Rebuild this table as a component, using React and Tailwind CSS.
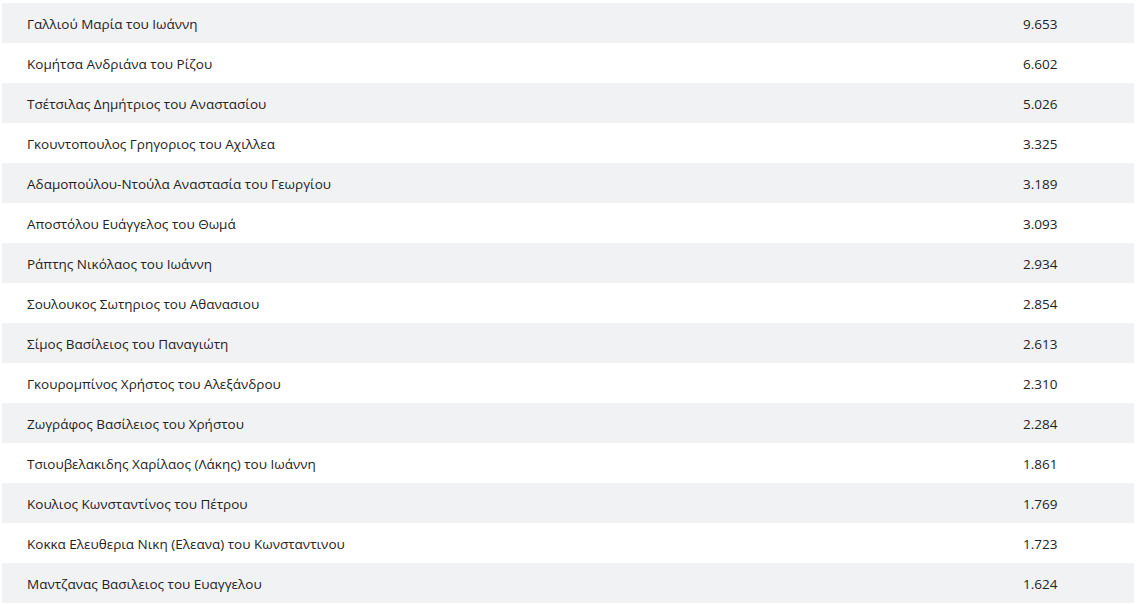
import React from "react";

const rows = [
  ["Γαλλιού Μαρία του Ιωάννη", "9.653"],
  ["Κομήτσα Ανδριάνα του Ρίζου", "6.602"],
  ["Τσέτσιλας Δημήτριος του Αναστασίου", "5.026"],
  ["Γκουντοπουλος Γρηγοριος του Αχιλλεα", "3.325"],
  ["Αδαμοπούλου-Ντούλα Αναστασία του Γεωργίου", "3.189"],
  ["Αποστόλου Ευάγγελος του Θωμά", "3.093"],
  ["Ράπτης Νικόλαος του Ιωάννη", "2.934"],
  ["Σουλουκος Σωτηριος του Αθανασιου", "2.854"],
  ["Σίμος Βασίλειος του Παναγιώτη", "2.613"],
  ["Γκουρομπίνος Χρήστος του Αλεξάνδρου", "2.310"],
  ["Ζωγράφος Βασίλειος του Χρήστου", "2.284"],
  ["Τσιουβελακιδης Χαρίλαος (Λάκης) του Ιωάννη", "1.861"],
  ["Κουλιος Κωνσταντίνος του Πέτρου", "1.769"],
  ["Κοκκα Ελευθερια Νικη (Ελεανα) του Κωνσταντινου", "1.723"],
  ["Μαντζανας Βασιλειος του Ευαγγελου", "1.624"],
];

export default function App() {
  return (
    <div className="bg-white pl-[2px] pr-[2px] pt-[3px] font-['Open_Sans',sans-serif] text-[13.5px] text-[#1f2326]">
      {rows.map(([name, votes], i) => (
        <div
          key={i}
          className={`flex h-[40px] items-center pt-[2px] ${i % 2 === 0 ? "bg-[#f1f2f4]" : "bg-white"}`}
        >
          <div className="flex-1 pl-[25px]">{name}</div>
          <div className="w-[111px]">{votes}</div>
        </div>
      ))}
    </div>
  );
}
